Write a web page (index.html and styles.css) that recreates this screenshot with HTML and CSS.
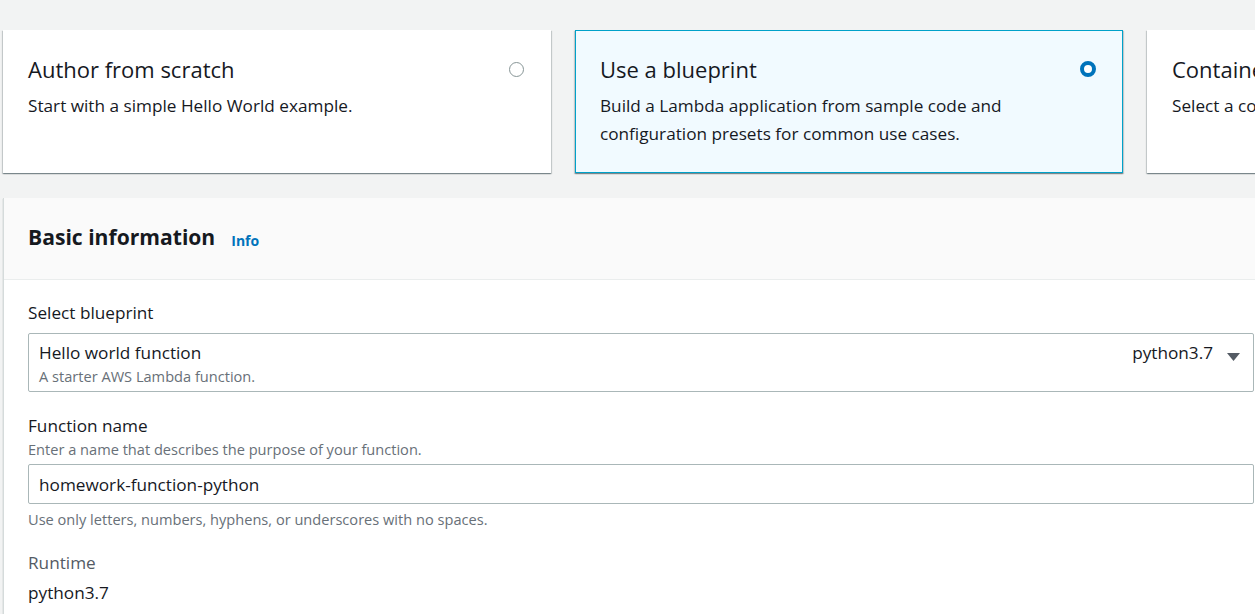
FILE: index.html
```html
<!DOCTYPE html>
<html lang="en">
<head>
<meta charset="utf-8">
<title>Create function</title>
<link rel="stylesheet" href="styles.css">
</head>
<body>
<div class="page">
  <div class="tiles">
    <div class="tile">
      <div class="tile-head">
        <div class="tile-title">Author from scratch</div>
        <span class="radio"></span>
      </div>
      <div class="tile-desc">Start with a simple Hello World example.</div>
    </div>
    <div class="tile tile-selected">
      <div class="tile-head">
        <div class="tile-title">Use a blueprint</div>
        <span class="radio radio-on"></span>
      </div>
      <div class="tile-desc">Build a Lambda application from sample code and configuration presets for common use cases.</div>
    </div>
    <div class="tile">
      <div class="tile-head">
        <div class="tile-title">Container image</div>
        <span class="radio"></span>
      </div>
      <div class="tile-desc">Select a container image to deploy for your function.</div>
    </div>
  </div>

  <section class="panel">
    <header class="panel-head">
      <h2 class="panel-title">Basic information</h2>
      <a class="info-link">Info</a>
    </header>
    <div class="panel-body">
      <div class="field">
        <div class="label">Select blueprint</div>
        <div class="select">
          <div class="select-text">
            <div class="select-main">Hello world function</div>
            <div class="select-sub">A starter AWS Lambda function.</div>
          </div>
          <div class="select-tag">python3.7</div>
          <svg class="caret" width="13" height="8" viewBox="0 0 13 8"><path d="M0 0 H13 L6.5 8 Z" fill="#545b64"/></svg>
        </div>
      </div>
      <div class="field">
        <div class="label">Function name</div>
        <div class="desc">Enter a name that describes the purpose of your function.</div>
        <div class="input">homework-function-python</div>
        <div class="hint">Use only letters, numbers, hyphens, or underscores with no spaces.</div>
      </div>
      <div class="field">
        <div class="label label-muted">Runtime</div>
        <div class="value">python3.7</div>
      </div>
    </div>
  </section>
</div>
</body>
</html>
```

FILE: styles.css
```css
* { box-sizing: border-box; }
html, body { margin: 0; padding: 0; }
body {
  background: #f2f3f3;
  font-family: "Open Sans", "Noto Sans", sans-serif;
  color: #16191f;
  overflow: hidden;
  width: 1255px;
  height: 614px;
}
.page {
  padding-left: 3px;
  width: 1400px;
}
.tiles {
  display: flex;
  gap: 24px;
  padding-top: 30px;
}
.tile {
  width: 548px;
  height: 143px;
  flex: none;
  background: #fff;
  border: 1px solid transparent;
  box-shadow: 0 1px 1px 0 rgba(0,28,36,.3), 1px 1px 1px 0 rgba(0,28,36,.15), -1px 1px 1px 0 rgba(0,28,36,.15);
  padding: 24px 24px 0 24px;
}
.tile-selected {
  background: #f1faff;
  border-color: #00a1c9;
}
.tile-head {
  display: flex;
  justify-content: space-between;
  align-items: center;
  height: 28px;
  padding-right: 2px;
}
.tile-title {
  font-size: 22px;
  line-height: 28px;
  font-weight: 400;
}
.radio {
  width: 15px;
  height: 15px;
  border-radius: 50%;
  border: 1px solid #879596;
  background: #fff;
}
.radio-on {
  width: 16px;
  height: 16px;
  border: 4.5px solid #0073bb;
}
.tile-desc {
  margin-top: 9px;
  font-size: 17.2px;
  line-height: 28px;
  width: 440px;
}
.panel {
  margin-top: 25px;
  width: 1290px;
  background: #fff;
  border-left: 1px solid #d5dbdb;
  box-shadow: 0 1px 1px 0 rgba(0,28,36,.3);
}
.panel-head {
  height: 82px;
  background: #fafafa;
  border-bottom: 1px solid #eaeded;
  display: flex;
  align-items: center;
  padding-left: 24px;
  gap: 16px;
}
.panel-title {
  margin: 0;
  font-size: 21.1px;
  font-weight: 700;
  line-height: 28px;
  margin-top: -3px;
}
.info-link {
  color: #0073bb;
  font-size: 14px;
  font-weight: 700;
  margin-top: 4px;
}
.panel-body {
  padding: 22px 39px 20px 24px;
}
.field + .field { margin-top: 23px; }
.label {
  font-size: 17.2px;
  line-height: 22px;
}
.label-muted { color: #545b64; }
.select {
  margin-top: 9px;
  height: 59px;
  border: 1px solid #aab7b8;
  border-radius: 2px;
  display: flex;
  align-items: flex-start;
  padding: 7px 13px 0 10px;
}
.select-text { flex: 1; }
.select-main {
  font-size: 17.2px;
  line-height: 24px;
}
.select-sub {
  font-size: 14.6px;
  line-height: 20px;
  color: #687078;
  margin-top: 1px;
}
.select-tag {
  font-size: 17.2px;
  line-height: 24px;
  margin-right: 14px;
}
.caret { margin-top: 12px; }
.desc, .hint {
  font-size: 14.6px;
  line-height: 20px;
  color: #687078;
}
.desc { margin-top: 2px; }
.input {
  margin-top: 5px;
  height: 40px;
  border: 1px solid #aab7b8;
  border-radius: 2px;
  padding: 0 10px;
  display: flex;
  align-items: center;
  font-size: 17.2px;
}
.hint { margin-top: 5px; }
.value {
  margin-top: 8px;
  font-size: 17.2px;
  line-height: 22px;
}
```
